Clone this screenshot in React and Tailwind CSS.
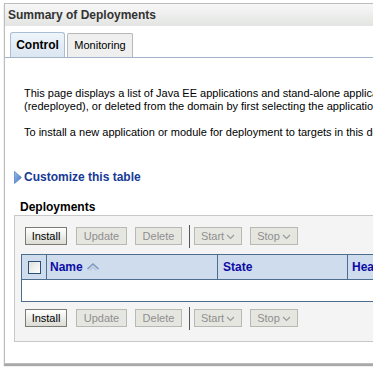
import React from 'react';

const font = { fontFamily: '"Liberation Sans", Arial, sans-serif' };

function Btn({ label, disabled, menu }) {
  return (
    <button
      className={`w-full flex items-center justify-center h-[18px] text-[11px] border ${
        disabled
          ? 'border-[#b9b9b4] bg-[#e6e6e1] text-[#8f8f8f]'
          : 'border-[#7b7b76] bg-gradient-to-b from-white to-[#dcdcd4] text-black'
      }`}
    >
      {label}
      {menu && (
        <svg width="9" height="6" viewBox="0 0 9 6" className="ml-[2px] mt-[2px]">
          <path d="M1 1 L4.5 4.5 L8 1" fill="none" stroke="#9a9a9a" strokeWidth="1.2" />
        </svg>
      )}
    </button>
  );
}

function Toolbar() {
  return (
    <div className="flex items-start h-[18px] pl-[10px]">
      <div className="w-[42px] flex"><Btn label="Install" /></div>
      <div className="w-[51px] ml-[9px] flex"><Btn label="Update" disabled /></div>
      <div className="w-[47px] ml-[8px] flex"><Btn label="Delete" disabled /></div>
      <div className="w-px h-[23px] -mt-[2px] ml-[7px] bg-[#555]" />
      <div className="w-[48px] ml-[4px] flex"><Btn label="Start" disabled menu /></div>
      <div className="w-[48px] ml-[8px] flex"><Btn label="Stop" disabled menu /></div>
    </div>
  );
}

export default function App() {
  return (
    <div className="w-[373px] h-[378px] overflow-hidden bg-white" style={font}>
      <div className="ml-[4px] mt-[3px] w-[700px] h-[361px] border border-[#bdbdbd] shadow-[0_2px_1px_#a8a8a8] bg-white">
        {/* header */}
        <div className="h-[22px] flex items-center pl-[3px] bg-gradient-to-b from-[#f7f7f7] to-[#e3e5e2] text-[12px] font-bold text-[#333]">
          Summary of Deployments
        </div>

        {/* tabs */}
        <div className="flex gap-[2px] pl-[5px] pt-[6px] border-b border-[#a3b4c9]">
          <div className="h-[25px] w-[55px] flex items-center justify-center rounded-t-[3px] border border-b-0 border-[#a9bdd3] bg-gradient-to-b from-[#eef4fa] to-[#dae6f2] text-[12px] font-bold text-black">
            Control
          </div>
          <div className="h-[24px] mt-[1px] w-[66px] flex items-center justify-center rounded-t-[2px] border border-b-0 border-[#b8b8b8] bg-[#efefef] text-[11px] text-black">
            Monitoring
          </div>
        </div>

        {/* content */}
        <div className="pl-[19px] pt-[29px] text-[11px] leading-[13px] text-black whitespace-nowrap">
          <p>
            This page displays a list of Java EE applications and stand-alone application modules that have been installed to this domain. Installed applications and modules can be started, stopped, updated
            <br />
            (redeployed), or deleted from the domain by first selecting the application name and using the controls on this page.
          </p>
          <p className="mt-[13px]">
            To install a new application or module for deployment to targets in this domain, click Install.
          </p>
        </div>

        <div className="flex items-center mt-[31px] pl-[9px] h-[14px]">
          <svg width="8" height="13" viewBox="0 0 8 13" className="mr-[2px]">
            <defs>
              <linearGradient id="tri" x1="0" y1="0" x2="1" y2="1">
                <stop offset="0" stopColor="#9fc0ea" />
                <stop offset="1" stopColor="#3a6fc0" />
              </linearGradient>
            </defs>
            <path d="M0.5 0.5 L7.5 6.5 L0.5 12.5 Z" fill="url(#tri)" stroke="#5b84c4" strokeWidth="0.8" />
          </svg>
          <span className="text-[12px] font-bold text-[#163a94]">Customize this table</span>
        </div>

        <div className="mt-[16px] pl-[15px] h-[14px] flex items-center text-[12px] font-bold text-black">
          Deployments
        </div>

        {/* table box */}
        <div className="ml-[9px] mt-px h-[127px] border border-[#c8c8c8] bg-[#f4f4f4] pt-[11px]">
          <Toolbar />
          <div className="ml-[6px] mt-[9px] w-[600px] border border-[#4e6d8e]">
            <div className="flex h-[25px] bg-[#cedcee] border-b border-[#4e6d8e] text-[12px] font-bold text-[#0c0ca4]">
              <div className="w-[25px] flex items-center justify-center border-r border-[#4e6d8e]">
                <div className="w-[13px] h-[13px] border border-[#2c4f7a] bg-gradient-to-br from-[#e0e0da] to-white" />
              </div>
              <div className="w-[171px] flex items-center pl-[3px] border-r border-[#4e6d8e]">
                Name
                <svg width="14" height="10" viewBox="0 0 14 10" className="ml-[3px]">
                  <path d="M1.5 7 L7 2 L12.5 7" fill="none" stroke="#7e98bb" strokeWidth="1.6" />
                  <path d="M3.5 8.5 L7 5.2 L10.5 8.5" fill="none" stroke="#b7c8dd" strokeWidth="1.4" />
                </svg>
              </div>
              <div className="w-[130px] flex items-center pl-[5px] border-r border-[#4e6d8e]">State</div>
              <div className="flex items-center pl-[4px]">Health</div>
            </div>
            <div className="h-[21px] bg-white" />
          </div>
          <div className="mt-[7px]">
            <Toolbar />
          </div>
        </div>
      </div>
    </div>
  );
}
